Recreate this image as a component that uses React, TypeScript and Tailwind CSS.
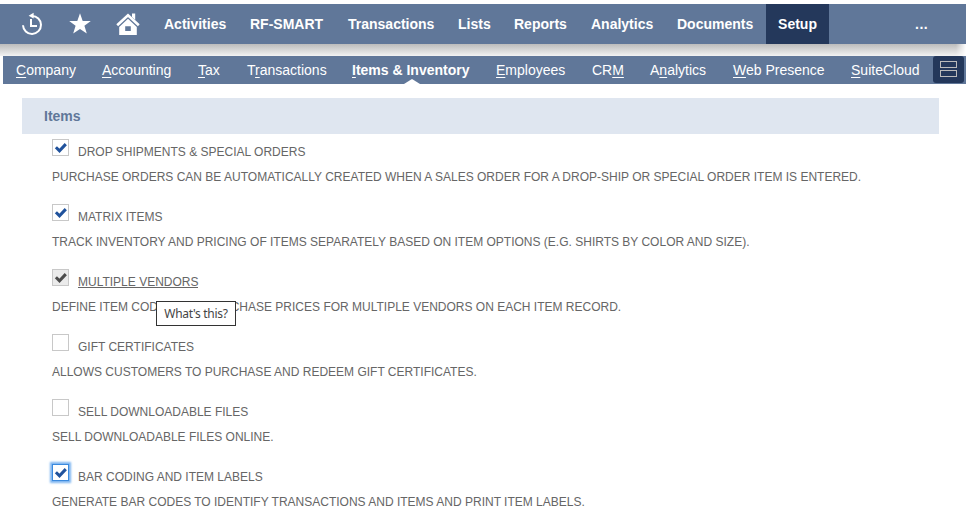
import React from "react";

const mainNav = [
  { label: "Activities", w: "w-[86px]" },
  { label: "RF-SMART", w: "w-[98px]" },
  { label: "Transactions", w: "w-[110px]" },
  { label: "Lists", w: "w-[56px]" },
  { label: "Reports", w: "w-[77px]" },
  { label: "Analytics", w: "w-[86px]" },
  { label: "Documents", w: "w-[89px]" },
];

const subNav = [
  { pre: "", key: "C", post: "ompany", w: "w-[86px]" },
  { pre: "", key: "A", post: "ccounting", w: "w-[96px]" },
  { pre: "", key: "T", post: "ax", w: "w-[49px]" },
  { pre: "T", key: "r", post: "ansactions", w: "w-[105px]" },
  { pre: "", key: "I", post: "tems & Inventory", w: "w-[144px]", active: true },
  { pre: "", key: "E", post: "mployees", w: "w-[96px]" },
  { pre: "CR", key: "M", post: "", w: "w-[58px]" },
  { pre: "A", key: "n", post: "alytics", w: "w-[83px]" },
  { pre: "", key: "W", post: "eb Presence", w: "w-[118px]" },
  { pre: "", key: "S", post: "uiteCloud", w: "w-[82px]" },
];

type Feature = {
  title: string;
  text: string;
  checked?: boolean;
  disabled?: boolean;
  focused?: boolean;
  tip?: string;
};

const features: Feature[] = [
  { title: "DROP SHIPMENTS & SPECIAL ORDERS", text: "PURCHASE ORDERS CAN BE AUTOMATICALLY CREATED WHEN A SALES ORDER FOR A DROP-SHIP OR SPECIAL ORDER ITEM IS ENTERED.", checked: true },
  { title: "MATRIX ITEMS", text: "TRACK INVENTORY AND PRICING OF ITEMS SEPARATELY BASED ON ITEM OPTIONS (E.G. SHIRTS BY COLOR AND SIZE).", checked: true },
  { title: "MULTIPLE VENDORS", text: "DEFINE ITEM CODES AND PURCHASE PRICES FOR MULTIPLE VENDORS ON EACH ITEM RECORD.", checked: true, disabled: true, tip: "What's this?" },
  { title: "GIFT CERTIFICATES", text: "ALLOWS CUSTOMERS TO PURCHASE AND REDEEM GIFT CERTIFICATES." },
  { title: "SELL DOWNLOADABLE FILES", text: "SELL DOWNLOADABLE FILES ONLINE." },
  { title: "BAR CODING AND ITEM LABELS", text: "GENERATE BAR CODES TO IDENTIFY TRANSACTIONS AND ITEMS AND PRINT ITEM LABELS.", checked: true, focused: true },
];

function HistoryIcon() {
  return (
    <svg width="22" height="24" viewBox="0 0 22 24" fill="none" stroke="#fff" className="ml-[21px] shrink-0">
      <path d="M11 3.9A9 9 0 1 1 2 13.2" strokeWidth="2" />
      <path d="M12.6 0.8V6.4L7.6 3.7Z" fill="#fff" stroke="none" />
      <path d="M10 7V14H16" strokeWidth="2" />
    </svg>
  );
}

function StarIcon() {
  return (
    <svg width="22" height="22" viewBox="0 0 22 22" fill="#fff" className="ml-[26px] shrink-0">
      <path d="M11 0.2L13.7 7.9H21.8L15.4 12.7L17.8 20.6L11 15.9L4.2 20.6L6.6 12.7L0.2 7.9H8.3Z" />
    </svg>
  );
}

function HomeIcon() {
  return (
    <svg width="24" height="24" viewBox="0 0 24 24" className="ml-[25px] shrink-0">
      <path d="M16 1.5H19.2V8L16 5Z" fill="#fff" />
      <path d="M1.2 13.2L12 3.2L22.8 13.2" fill="none" stroke="#fff" strokeWidth="2.6" />
      <path d="M12 6.8L20.8 15V23H3.2V15ZM9.2 14.2V19H14.8V14.2Z" fill="#fff" fillRule="evenodd" />
    </svg>
  );
}

function Checkbox({ checked, disabled, focused }: Feature) {
  const frame = focused
    ? "border-[#3b8ade] bg-white shadow-[0_0_2px_2px_#7db5f0]"
    : disabled
      ? "border-[#c8c8c8] bg-[#ebebeb]"
      : "border-[#c8c8c8] bg-white";
  return (
    <span className={"block h-[17px] w-[17px] shrink-0 border " + frame}>
      {checked && (
        <svg width="15" height="15" viewBox="0 0 15 15" fill="none" stroke={disabled ? "#4c4c4c" : "#20529c"} strokeWidth="3">
          <path d="M2.9 7.2L6.5 10.8L12.8 4.1" />
        </svg>
      )}
    </span>
  );
}

function FeatureRow(f: Feature) {
  return (
    <li className="h-[65px]">
      <div className="flex h-[27px] items-start pt-[5px]">
        <Checkbox {...f} />
        <span className="relative ml-[9px] mt-[6px] text-[12px] leading-[15px]">
          <span className={f.tip ? "block h-[13px] border-b border-[#666]" : "block"}>{f.title}</span>
          {f.tip && (
            <span className="absolute left-[78px] top-[26px] flex h-[25px] w-[80px] items-center justify-center whitespace-nowrap border border-[#333] bg-white font-['Noto_Sans',sans-serif] text-[12px] tracking-[-0.3px] text-[#444]">
              {f.tip}
            </span>
          )}
        </span>
      </div>
      <p className="mt-[9px] whitespace-nowrap text-[12px] leading-[15px]">{f.text}</p>
    </li>
  );
}

export default function App() {
  return (
    <div className="h-[517px] w-[966px] overflow-hidden bg-white pt-1 font-['Liberation_Sans',Arial,sans-serif] text-[14px] text-[#666]">
      <header className="flex h-10 items-center bg-[#607799] font-bold text-white">
        <HistoryIcon />
        <StarIcon />
        <HomeIcon />
        <nav className="ml-[24px] flex h-10 items-center whitespace-nowrap">
          {mainNav.map((n) => (
            <a key={n.label} className={"shrink-0 " + n.w}>{n.label}</a>
          ))}
          <a className="flex h-10 w-[63px] shrink-0 items-center justify-center bg-[#24385b]">Setup</a>
          <a className="ml-[86px] tracking-[0.5px]">...</a>
        </nav>
      </header>
      <div className="h-3">
        <div className="h-3 bg-linear-to-b from-[#bcbcbc] to-[#f3f3f3] [mask-image:linear-gradient(to_right,black_calc(100%-10px),transparent)]" />
      </div>
      <div className="ml-[3px] flex h-7 items-center bg-[#607799] pl-[13px] text-white">
        {subNav.map((n) => (
          <a key={n.key + n.post} className={"relative flex h-7 shrink-0 items-center whitespace-nowrap " + n.w + (n.active ? " font-bold" : "")}>
            <span className="whitespace-pre">
              {n.pre}
              <u className="underline-offset-2">{n.key}</u>
              {n.post}
            </span>
            {n.active && (
              <svg width="16" height="5" viewBox="0 0 16 5" className="absolute bottom-0 left-[52px]">
                <path d="M0 5L8 0L16 5Z" fill="#fff" />
              </svg>
            )}
          </a>
        ))}
        <button className="flex h-[27px] w-[31px] shrink-0 flex-col items-center gap-[2px] self-start rounded-[3px] bg-[#24385b] pt-[5px]">
          <span className="block h-[7px] w-[17px] border border-[#bbb]" />
          <span className="block h-[7px] w-[17px] border border-[#bbb]" />
        </button>
      </div>
      <main className="pl-[22px] pt-[14px]">
        <h2 className="flex h-9 w-[917px] items-center bg-[#dfe6f0] pl-[22px] font-bold text-[#607799]">Items</h2>
        <ul className="pl-[30px]">
          {features.map((f) => (
            <FeatureRow key={f.title} {...f} />
          ))}
        </ul>
      </main>
    </div>
  );
}
